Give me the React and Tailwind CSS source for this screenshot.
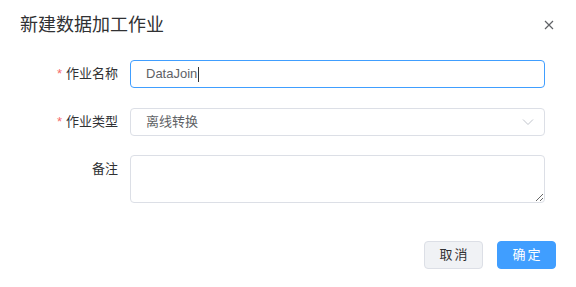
import React from "react";

const font = { fontFamily: '"Liberation Sans","Noto Sans CJK SC",sans-serif' };

const Label = ({ required, children }) => (
  <div className="w-[110px] shrink-0 pr-3 text-right text-[13px] leading-[28px] text-[#303133]">
    {required && <span className="mr-1 text-[#f56c6c]">*</span>}
    {children}
  </div>
);

const App = () => {
  return (
    <div className="h-[287px] w-[576px] bg-white" style={font}>
      <div className="flex items-center justify-between pl-5 pr-[22px] pt-[13px]">
        <h1 className="text-[18px] leading-[24px] text-[#303133]">新建数据加工作业</h1>
        <svg width="10" height="10" viewBox="0 0 10 10" className="text-[#606266]">
          <path d="M1 1L9 9M9 1L1 9" stroke="currentColor" strokeWidth="1.2" />
        </svg>
      </div>

      <div className="mt-[23px] pl-5 pr-[31px]">
        <div className="flex">
          <Label required>作业名称</Label>
          <div className="flex h-[28px] flex-1 items-center rounded border border-[#409eff] px-[15px] text-[13px] text-[#606266]">
            DataJoin
            <span className="ml-px inline-block h-[15px] w-px bg-[#303133]"></span>
          </div>
        </div>

        <div className="mt-5 flex">
          <Label required>作业类型</Label>
          <div className="flex h-[28px] flex-1 items-center justify-between rounded border border-[#dcdfe6] pl-[15px] pr-[10px] text-[13px] text-[#606266]">
            <span>离线转换</span>
            <svg width="12" height="8" viewBox="0 0 12 8" className="text-[#c0c4cc]">
              <path d="M1 1.5L6 6.5L11 1.5" fill="none" stroke="currentColor" strokeWidth="1" />
            </svg>
          </div>
        </div>

        <div className="mt-[19px] flex">
          <Label>备注</Label>
          <textarea
            className="h-[48px] flex-1 rounded border border-[#dcdfe6] px-[15px] py-[5px] text-[13px] text-[#606266] outline-none"
            style={font}
          />
        </div>
      </div>

      <div className="mt-[38px] flex justify-end gap-[14px] pr-5">
        <button className="h-[28px] w-[59px] rounded border border-[#dcdfe6] bg-[#f0f2f5] pl-[2px] text-[13px] tracking-[2px] text-[#303133]">
          取消
        </button>
        <button className="h-[28px] w-[59px] rounded border border-[#409eff] bg-[#409eff] pl-[2px] text-[13px] tracking-[2px] text-white">
          确定
        </button>
      </div>
    </div>
  );
};

export default App;
